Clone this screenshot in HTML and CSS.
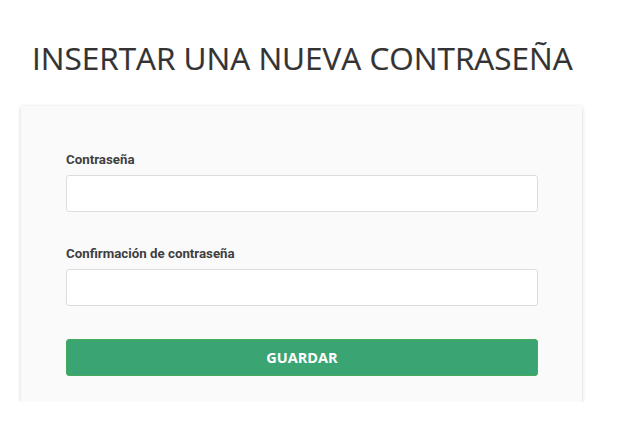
FILE: index.html
```html
<!DOCTYPE html>
<html lang="es">
<head>
<meta charset="utf-8">
<title>Insertar una nueva contraseña</title>
<link rel="stylesheet" href="styles.css">
</head>
<body>
<main class="page">
  <h1 class="title">INSERTAR UNA NUEVA CONTRASEÑA</h1>
  <form class="card">
    <div class="field">
      <label class="label" for="pw">Contraseña</label>
      <input class="input" id="pw" type="password">
    </div>
    <div class="field">
      <label class="label" for="pw2">Confirmación de contraseña</label>
      <input class="input" id="pw2" type="password">
    </div>
    <button class="btn" type="button">GUARDAR</button>
  </form>
</main>
</body>
</html>
```

FILE: styles.css
```css
html, body {
  margin: 0;
  padding: 0;
  background: #ffffff;
}
.page {
  width: 561px;
  padding: 0 21px;
}
.title {
  margin: 0;
  padding: 38px 0 0 11px;
  font-family: "Open Sans", sans-serif;
  font-weight: 400;
  font-size: 31.5px;
  line-height: 40px;
  color: #333333;
  -webkit-text-stroke: 0.2px #333333;
}
.card {
  margin-top: 28px;
  background: #fafafa;
  box-shadow: 0 1px 4px rgba(0, 0, 0, 0.18);
  padding: 45px 44px 26px 45px;
  display: flex;
  flex-direction: column;
}
.field {
  display: flex;
  flex-direction: column;
  gap: 6px;
  margin-bottom: 33px;
}
.label {
  font-family: Roboto, sans-serif;
  font-weight: 700;
  font-size: 13.3px;
  line-height: 18px;
  color: #3f3f3f;
}
.input {
  box-sizing: border-box;
  height: 37px;
  width: 100%;
  border: 1px solid #dddddd;
  border-radius: 3px;
  background: #ffffff;
  margin: 0;
}
.btn {
  box-sizing: border-box;
  height: 37px;
  width: 100%;
  border: 1px solid #45ab5a;
  border-radius: 3px;
  background: #3aa473;
  color: #ffffff;
  font-family: "Open Sans", sans-serif;
  font-weight: 700;
  font-size: 14.5px;
  cursor: pointer;
}
```
